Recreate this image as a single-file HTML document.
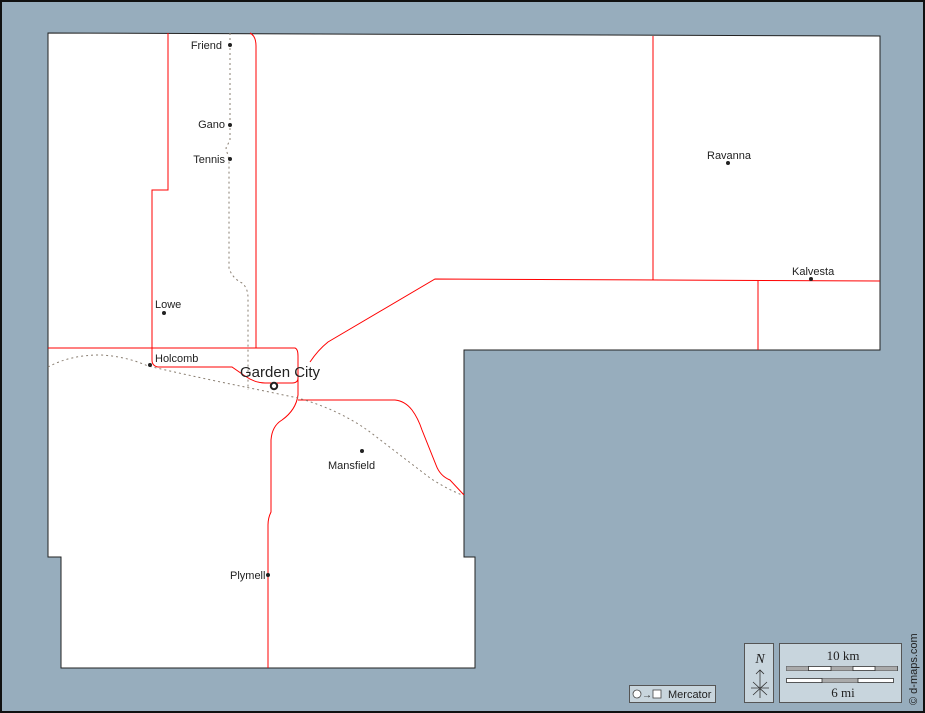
<!DOCTYPE html>
<html><head><style>
html,body{margin:0;padding:0;background:#97adbd;}
svg{display:block;}
text{font-family:"Liberation Sans",sans-serif;fill:#222;}
text.serif{font-family:"Liberation Serif",serif;}
</style></head><body>
<svg width="925" height="713" viewBox="0 0 925 713" xmlns="http://www.w3.org/2000/svg">
<rect x="0" y="0" width="925" height="713" fill="#97adbd"/>
<rect x="1" y="1" width="923" height="711" fill="none" stroke="#111" stroke-width="2"/>
<polygon points="48,33 880,36 880,350 464,350 464,557 475,557 475,668 61,668 61,557 48,557" fill="#fff" stroke="#222" stroke-width="1"/>
<g fill="none" stroke="#f00" stroke-width="1">
<path d="M168,33 V190 H152 V350"/>
<path d="M250,33 Q256,36 256,46 V348"/>
<path d="M48,348 H295 Q298,349 298,356 V378 Q298,383 292,383 H265 Q255,383 245,376 L232,367 H158 Q152,366 152,360 V350"/>
<path d="M298,378 V395 Q296,410 282,420 Q272,426 271,440 V512 Q268,518 268,525 V668"/>
<path d="M298,400 H395 Q405,401 412,410 Q418,418 422,430 L436,465 Q440,476 450,480 L464,495"/>
<path d="M310,362 Q318,350 328,342 L435,279 L880,281"/>
<path d="M653,36 V280"/>
<path d="M758,281 V350"/>
</g>
<g fill="none" stroke="#8a7f72" stroke-width="1" stroke-dasharray="2,3">
<path d="M230,33 V140 L226,148 L229,160 V268 Q232,278 242,283 Q248,288 248,298 V390"/>
<path d="M48,367 Q70,355 100,355 Q125,356 148,366 Q200,378 250,388 L298,398 Q340,410 370,432 Q400,455 430,478 Q445,488 462,495"/>
</g>
<g fill="#222">
<circle cx="230" cy="45" r="2"/><circle cx="230" cy="125" r="2"/><circle cx="230" cy="159" r="2"/>
<circle cx="728" cy="163" r="2"/><circle cx="811" cy="279" r="2"/><circle cx="164" cy="313" r="2"/>
<circle cx="150" cy="365" r="2"/><circle cx="362" cy="451" r="2"/><circle cx="268" cy="575" r="2"/>
</g>
<circle cx="274" cy="386" r="3.2" fill="#fff" stroke="#222" stroke-width="2"/>
<g font-size="11">
<text x="222" y="49" text-anchor="end">Friend</text>
<text x="225" y="128" text-anchor="end">Gano</text>
<text x="225" y="163" text-anchor="end">Tennis</text>
<text x="707" y="159">Ravanna</text>
<text x="792" y="275">Kalvesta</text>
<text x="155" y="308">Lowe</text>
<text x="155" y="362">Holcomb</text>
<text x="328" y="469">Mansfield</text>
<text x="230" y="579">Plymell</text>
</g>
<text x="240" y="377" font-size="15">Garden City</text>
<rect x="629.5" y="685.5" width="86" height="17" fill="#c8d5dd" stroke="#555"/>
<circle cx="637" cy="694" r="4" fill="#fff" stroke="#444" stroke-width="0.8"/>
<text x="642" y="698" font-size="10">→</text>
<rect x="653" y="690" width="8" height="8" fill="#fff" stroke="#444" stroke-width="0.8"/>
<text x="668" y="698" font-size="11">Mercator</text>
<rect x="744.5" y="643.5" width="29" height="59" fill="#c8d5dd" stroke="#555"/>
<text class="serif" x="760" y="663" font-size="14" font-style="italic" text-anchor="middle">N</text>
<path d="M760,670 V698 M756,674 L760,670 L764,674 M751,688 H769 M753,682 L767,695 M767,682 L753,695" stroke="#333" stroke-width="0.8" fill="none"/>
<rect x="779.5" y="643.5" width="122" height="59" fill="#c8d5dd" stroke="#555"/>
<text class="serif" x="843" y="660" font-size="13" text-anchor="middle">10 km</text>
<text class="serif" x="843" y="697" font-size="13" text-anchor="middle">6 mi</text>
<rect x="786.5" y="666.5" width="111" height="4" fill="#fff" stroke="#333" stroke-width="0.8"/>
<rect x="786.5" y="666.5" width="22" height="4" fill="#aaa"/><rect x="831" y="666.5" width="22" height="4" fill="#aaa"/><rect x="875" y="666.5" width="22" height="4" fill="#aaa"/>
<path d="M808.5,666 V671 M831,666 V671 M853,666 V671 M875,666 V671" stroke="#333" stroke-width="0.8"/>
<rect x="786.5" y="678.5" width="107" height="4" fill="#fff" stroke="#333" stroke-width="0.8"/>
<rect x="822" y="678.5" width="36" height="4" fill="#aaa"/>
<path d="M822,678 V683 M858,678 V683" stroke="#333" stroke-width="0.8"/>
<text transform="translate(917,705) rotate(-90)" font-size="11">© d-maps.com</text>
</svg>
</body></html>
